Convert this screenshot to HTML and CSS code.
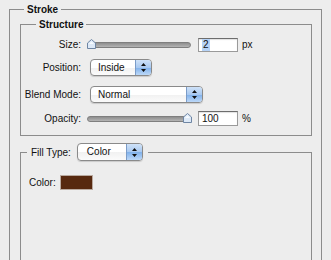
FILE: index.html
```html
<!DOCTYPE html>
<html lang="en">
<head>
  <meta charset="UTF-8" />
  <title>Stroke</title>
  <link rel="stylesheet" href="styles.css">
</head>
<body>

  <fieldset class="group outer">
    <legend class="title">Stroke</legend>

    <fieldset class="group structure">
      <legend class="title">Structure</legend>

      <div class="row row-size">
        <span class="label">Size:</span>
        <div class="slider">
          <span class="track"></span>
          <svg class="thumb" style="left: 0px" width="9" height="10" viewBox="0 0 9 10">
            <path d="M0.5 4 L4.5 0.5 L8.5 4 L8.5 9.5 L0.5 9.5 Z" fill="#dde9f7" stroke="#6f86a4" />
            <path d="M2 5 L4.5 2.6 L7 5 Z" fill="#f7fbff" />
          </svg>
        </div>
        <span class="field"><span class="sel">2</span></span>
        <span class="unit">px</span>
      </div>

      <div class="row row-position">
        <span class="label">Position:</span>
        <div class="popup popup-position">
          <span class="popup-text">Inside</span>
          <span class="popup-arrows">
            <svg width="7" height="11" viewBox="0 0 7 11"><path d="M3.5 1 L6 4 L1 4 Z M3.5 10 L6 7 L1 7 Z" fill="#111" /></svg>
          </span>
        </div>
      </div>

      <div class="row row-blend">
        <span class="label">Blend Mode:</span>
        <div class="popup popup-blend">
          <span class="popup-text">Normal</span>
          <span class="popup-arrows">
            <svg width="7" height="11" viewBox="0 0 7 11"><path d="M3.5 1 L6 4 L1 4 Z M3.5 10 L6 7 L1 7 Z" fill="#111" /></svg>
          </span>
        </div>
      </div>

      <div class="row row-opacity">
        <span class="label">Opacity:</span>
        <div class="slider">
          <span class="track"></span>
          <svg class="thumb" style="left: 96px" width="9" height="10" viewBox="0 0 9 10">
            <path d="M0.5 4 L4.5 0.5 L8.5 4 L8.5 9.5 L0.5 9.5 Z" fill="#dde9f7" stroke="#6f86a4" />
            <path d="M2 5 L4.5 2.6 L7 5 Z" fill="#f7fbff" />
          </svg>
        </div>
        <span class="field">100</span>
        <span class="unit">%</span>
      </div>
    </fieldset>

    <fieldset class="group fill">
      <legend class="fill-legend">
        <span class="fill-label">Fill Type:</span>
        <div class="popup popup-fill">
          <span class="popup-text">Color</span>
          <span class="popup-arrows">
            <svg width="7" height="11" viewBox="0 0 7 11"><path d="M3.5 1 L6 4 L1 4 Z M3.5 10 L6 7 L1 7 Z" fill="#111" /></svg>
          </span>
        </div>
      </legend>

      <div class="color-row">
        <span>Color:</span>
        <span class="swatch"></span>
      </div>
    </fieldset>
  </fieldset>

</body>
</html>
```

FILE: styles.css
```css
body {
  margin: 0;
  background: #ededed;
  font-family: "Liberation Sans", Arial, sans-serif;
  font-size: 10px;
  color: #111;
}

.group {
  margin: 0;
  padding: 0;
  min-width: 0;
  border: 1px solid #8c8c8c;
}

.title {
  font-weight: bold;
  line-height: 13px;
  padding: 0 3px;
}

.outer {
  margin: 3px 9px 0 9px;
  padding-top: 2px;
  height: 270px;
}

.outer > .title {
  margin-left: 14px;
}

.structure {
  margin: 0 9px 0 10px;
  padding: 5px 0 8px 0;
}

.structure > .title {
  margin-left: 15px;
}

/* rows */
.row {
  display: flex;
  align-items: center;
  height: 17px;
}

.row-position { margin-top: 6px; }
.row-blend { margin-top: 10px; }
.row-opacity { margin-top: 7px; }

.label {
  width: 60px;
  text-align: right;
  margin-right: 6px;
}

.slider {
  position: relative;
  display: flex;
  align-items: center;
  width: 104px;
  height: 17px;
}

.track {
  flex: 1;
  height: 4px;
  border: 1px solid #7f7f7f;
  border-radius: 3px;
  background: linear-gradient(#8e8e8e, #b4b4b4);
}

.thumb {
  position: absolute;
  top: 3px;
}

.field {
  box-sizing: border-box;
  width: 40px;
  height: 14px;
  margin-left: 7px;
  padding: 0 0 0 3px;
  line-height: 12px;
  background: #fff;
  border: 1px solid #9a9a9a;
  border-top-color: #6d6d6d;
  box-shadow: inset 0 1px 1px rgba(0, 0, 0, 0.12);
}

.row-opacity .field {
  height: 15px;
  line-height: 13px;
}

.sel {
  display: inline-block;
  background: #b6d3f7;
  padding: 0 1px;
}

.unit {
  margin-left: 4px;
}

/* popup buttons */
.popup {
  box-sizing: border-box;
  display: flex;
  height: 17px;
  margin-left: 3px;
  border: 1px solid #8a8a8a;
  border-radius: 4px;
  background: linear-gradient(#ffffff 0%, #ffffff 50%, #f1f1f1 51%, #fbfbfb 100%);
  box-shadow: 0 1px 1px rgba(0, 0, 0, 0.15);
  overflow: hidden;
}

.popup-text {
  flex: 1;
  padding-left: 7px;
  line-height: 15px;
}

.popup-arrows {
  display: flex;
  align-items: center;
  justify-content: center;
  width: 15px;
  border-left: 1px solid #7b9cc8;
  background: linear-gradient(#cfe2f8 0%, #a9c9f0 50%, #7fb0ea 51%, #bcd8f8 100%);
}

.popup-position { width: 62px; }
.popup-blend { width: 113px; }

/* fill type */
.fill {
  margin: 7px 9px 0 10px;
  padding: 14px 0 0 0;
  min-height: 110px;
}

.fill-legend {
  display: flex;
  align-items: center;
  margin-left: 6px;
  padding: 0 5px 0 4px;
}

.fill-label {
  margin-right: 6px;
}

.popup-fill {
  width: 66px;
  height: 18px;
  margin-left: 0;
}

.popup-fill .popup-text {
  line-height: 16px;
  padding-left: 9px;
}

.color-row {
  display: flex;
  align-items: center;
  gap: 4px;
  padding-left: 8px;
}

.swatch {
  width: 31px;
  height: 13px;
  background: #57290f;
  border: 1px solid #b9aaa0;
}
```
